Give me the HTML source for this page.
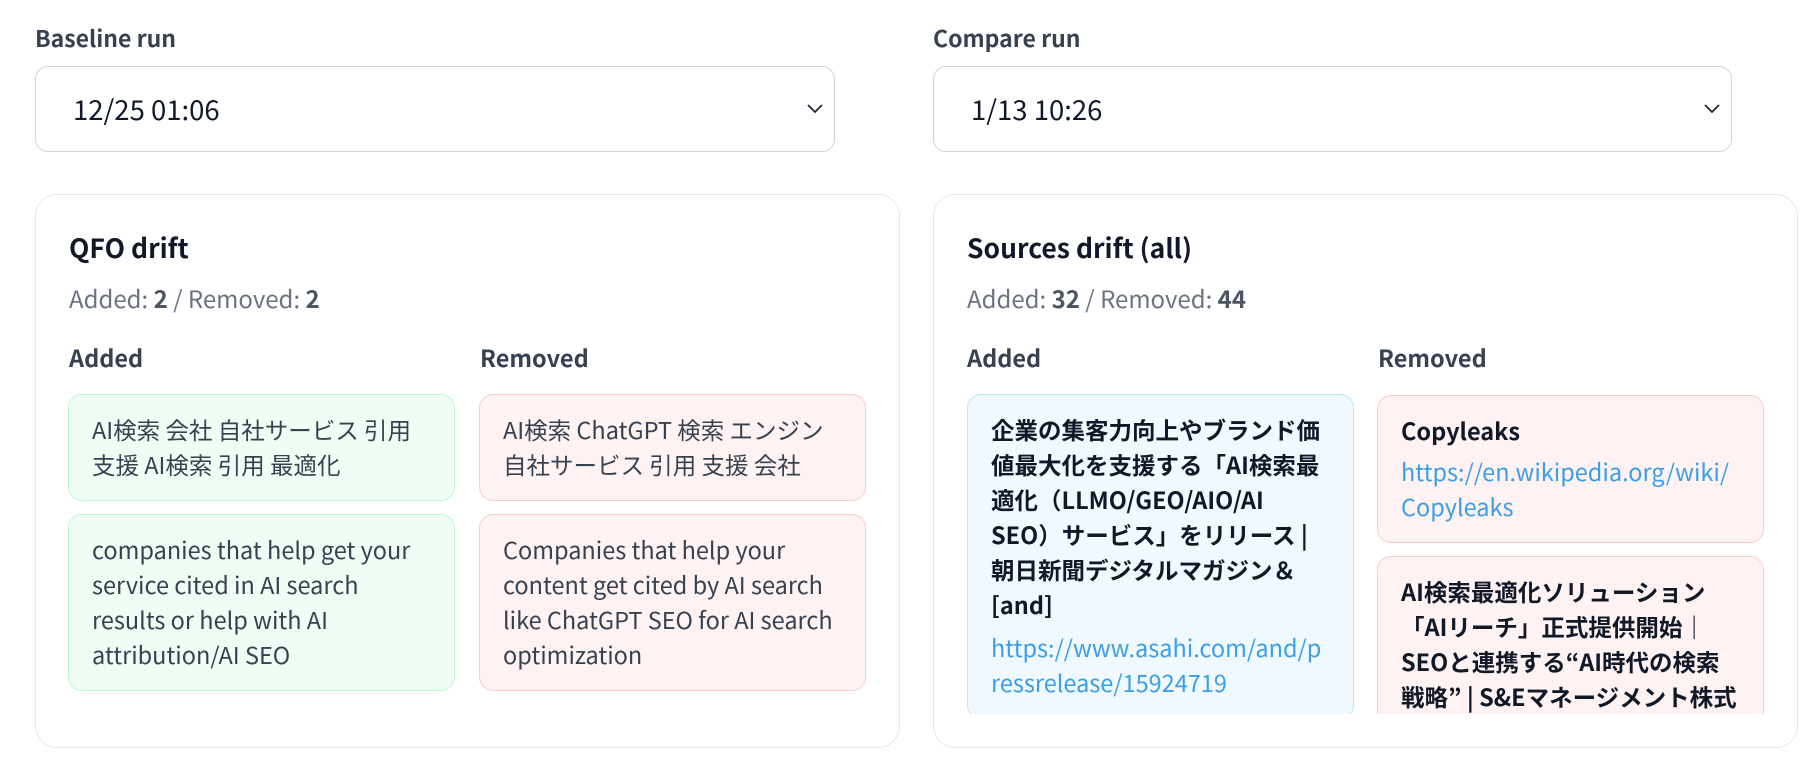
<!DOCTYPE html>
<html><head><meta charset="utf-8">
<style>
*{box-sizing:border-box;margin:0;padding:0}
html,body{width:1810px;height:758px;overflow:hidden;background:#fff}
body{font-family:"Noto Sans CJK JP","Liberation Sans",sans-serif;color:#1f2937;position:relative}
.lbl{position:absolute;top:22px;font-size:23px;font-weight:700;color:#374151;line-height:30px}
.sel{position:absolute;top:66px;height:86px;border:1.5px solid #d1d5db;border-radius:13px;font-size:27.5px;line-height:83px;padding-left:37px;color:#111827}
.sel svg{position:absolute;right:10px;top:36px}
.card{position:absolute;top:194px;height:554px;border:1.5px solid #e5e7eb;border-radius:22px}
.title{position:absolute;left:33px;top:34px;font-size:26.5px;font-weight:700;color:#111827;line-height:36px;white-space:nowrap}
.stats{position:absolute;left:33px;top:87px;font-size:24px;color:#6b7280;line-height:32px;white-space:nowrap}
.stats b{color:#4b5563}
.h{position:absolute;top:146px;font-size:23.5px;font-weight:700;color:#374151;line-height:32px}
.col{position:absolute;top:199px;width:387px;overflow:hidden}
.box{border:1.5px solid;border-radius:14px;padding:17px 20px 18px 23px;font-size:23.5px;line-height:35px;white-space:nowrap;margin-bottom:13px}
.g{background:#f0fdf4;border-color:#bbf7d0;color:#374151}
.r{background:#fef2f2;border-color:#fecaca;color:#374151}
.b{background:#f0f9ff;border-color:#bae6fd}
.bold{font-weight:700;color:#111827}
.link{color:#3b9ee6;margin-top:8px}
</style></head><body>
<div class="lbl" style="left:35px">Baseline run</div>
<div class="sel" style="left:35px;width:800px">12/25 01:06<svg width="18" height="12" viewBox="0 0 18 12"><path d="M2 2l7 7 7-7" fill="none" stroke="#1f2937" stroke-width="1.8"/></svg></div>
<div class="lbl" style="left:933px">Compare run</div>
<div class="sel" style="left:933px;width:799px">1/13 10:26<svg width="18" height="12" viewBox="0 0 18 12"><path d="M2 2l7 7 7-7" fill="none" stroke="#1f2937" stroke-width="1.8"/></svg></div>

<div class="card" style="left:35px;width:865px">
 <div class="title">QFO drift</div>
 <div class="stats">Added: <b>2</b> / Removed: <b>2</b></div>
 <div class="h" style="left:33px">Added</div>
 <div class="h" style="left:444px">Removed</div>
 <div class="col" style="left:32px">
  <div class="box g">AI検索 会社 自社サービス 引用<br>支援 AI検索 引用 最適化</div>
  <div class="box g">companies that help get your<br>service cited in AI search<br>results or help with AI<br>attribution/AI SEO</div>
 </div>
 <div class="col" style="left:443px">
  <div class="box r">AI検索 ChatGPT 検索 エンジン<br>自社サービス 引用 支援 会社</div>
  <div class="box r">Companies that help your<br>content get cited by AI search<br>like ChatGPT SEO for AI search<br>optimization</div>
 </div>
</div>

<div class="card" style="left:933px;width:865px">
 <div class="title">Sources drift (all)</div>
 <div class="stats">Added: <b>32</b> / Removed: <b>44</b></div>
 <div class="h" style="left:33px">Added</div>
 <div class="h" style="left:444px">Removed</div>
 <div class="col" style="left:33px;top:199px;height:320px">
  <div class="box b"><div class="bold">企業の集客力向上やブランド価<br>値最大化を支援する「AI検索最<br>適化（LLMO/GEO/AIO/AI<br>SEO）サービス」をリリース |<br>朝日新聞デジタルマガジン＆<br>[and]</div><div class="link">https://www.asahi.com/and/p<br>ressrelease/15924719</div></div>
 </div>
 <div class="col" style="left:443px;top:200px;height:319px">
  <div class="box r"><div class="bold">Copyleaks</div><div class="link" style="margin-top:6px">https://en.wikipedia.org/wiki/<br>Copyleaks</div></div>
  <div class="box r" style="padding-top:17px"><div class="bold">AI検索最適化ソリューション<br>「AIリーチ」正式提供開始｜<br>SEOと連携する“AI時代の検索<br>戦略” | S&amp;Eマネージメント株式<br>会社</div></div>
 </div>
</div>
</body></html>
